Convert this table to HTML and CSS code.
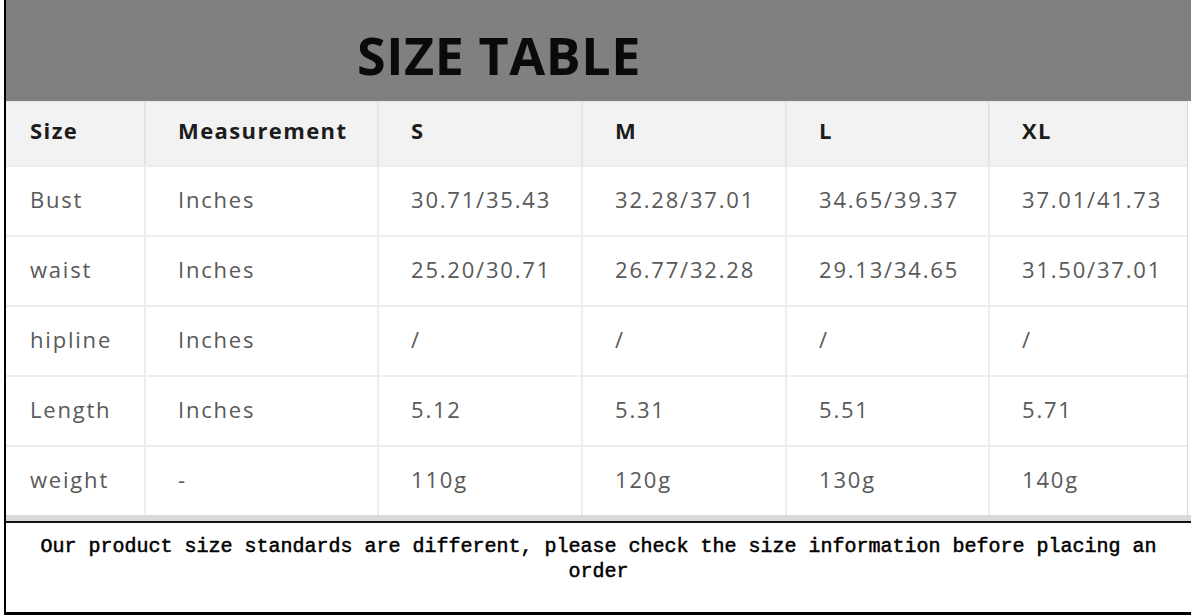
FILE: index.html
```html
<!DOCTYPE html>
<html>
<head>
<meta charset="utf-8">
<link rel="stylesheet" href="styles.css">
</head>
<body>
<div class="frame">
  <div class="banner"><h1 class="title">SIZE TABLE</h1></div>
  <div class="table">
    <div class="row head">
      <div class="cell c1">Size</div><div class="cell c2">Measurement</div><div class="cell c3">S</div><div class="cell c4">M</div><div class="cell c5">L</div><div class="cell c6">XL</div>
    </div>
    <div class="row">
      <div class="cell c1">Bust</div><div class="cell c2">Inches</div><div class="cell c3">30.71/35.43</div><div class="cell c4">32.28/37.01</div><div class="cell c5">34.65/39.37</div><div class="cell c6">37.01/41.73</div>
    </div>
    <div class="row">
      <div class="cell c1">waist</div><div class="cell c2">Inches</div><div class="cell c3">25.20/30.71</div><div class="cell c4">26.77/32.28</div><div class="cell c5">29.13/34.65</div><div class="cell c6">31.50/37.01</div>
    </div>
    <div class="row">
      <div class="cell c1">hipline</div><div class="cell c2">Inches</div><div class="cell c3">/</div><div class="cell c4">/</div><div class="cell c5">/</div><div class="cell c6">/</div>
    </div>
    <div class="row">
      <div class="cell c1">Length</div><div class="cell c2">Inches</div><div class="cell c3">5.12</div><div class="cell c4">5.31</div><div class="cell c5">5.51</div><div class="cell c6">5.71</div>
    </div>
    <div class="row last">
      <div class="cell c1">weight</div><div class="cell c2">-</div><div class="cell c3">110g</div><div class="cell c4">120g</div><div class="cell c5">130g</div><div class="cell c6">140g</div>
    </div>
  </div>
  <div class="strip"></div>
  <p class="note">Our product size standards are different, please check the size information before placing an order</p>
</div>
</body>
</html>
```

FILE: styles.css
```css
html, body {
  margin: 0;
  padding: 0;
  background: #ffffff;
}
.frame {
  margin-left: 4px;
  width: 1187px;
  height: 615px;
  box-sizing: border-box;
  border-left: 2px solid #000;
  border-bottom: 3px solid #000;
  display: flex;
  flex-direction: column;
}
.banner {
  height: 101px;
  background: #808080;
  display: flex;
  align-items: center;
  padding-left: 351px;
  padding-top: 8px;
  box-sizing: border-box;
}
.title {
  margin: 0;
  font-family: "Open Sans", "Liberation Sans", sans-serif;
  font-weight: 700;
  font-size: 52px;
  line-height: 1;
  color: #0a0a0a;
  letter-spacing: 0.6px;
}
.table {
  width: 1182px;
  border-right: 1px solid #d9d9d9;
  box-sizing: border-box;
  font-family: "Open Sans", "Liberation Sans", sans-serif;
}
.row {
  display: grid;
  grid-template-columns: 138px 233px 204px 204px 203px 1fr;
  height: 70px;
  border-top: 2px solid #ededed;
  box-sizing: border-box;
}
.row.head {
  height: 64px;
  background: #f2f2f2;
  border-top: 1px solid #e6e6e6;
}
.cell {
  display: flex;
  align-items: center;
  padding-left: 32px;
  padding-bottom: 4px;
  border-left: 2px solid #ededed;
  font-size: 22px;
  color: #595959;
  letter-spacing: 1.8px;
}
.cell.c1 {
  padding-left: 24px;
  border-left: none;
}
.head .cell {
  font-weight: 700;
  color: #1c1c1c;
  border-left-color: #e3e3e3;
  letter-spacing: 1.4px;
  padding-bottom: 8px;
}
.strip {
  height: 6px;
  background: #d9d9d9;
  border-bottom: 2px solid #111;
}
.note {
  margin: 0;
  padding: 11px 28px 0;
  text-align: center;
  font-family: "Liberation Mono", "DejaVu Sans Mono", monospace;
  font-weight: 400;
  font-size: 20px;
  line-height: 25px;
  color: #000;
  -webkit-text-stroke: 0.5px #000;
}
```
